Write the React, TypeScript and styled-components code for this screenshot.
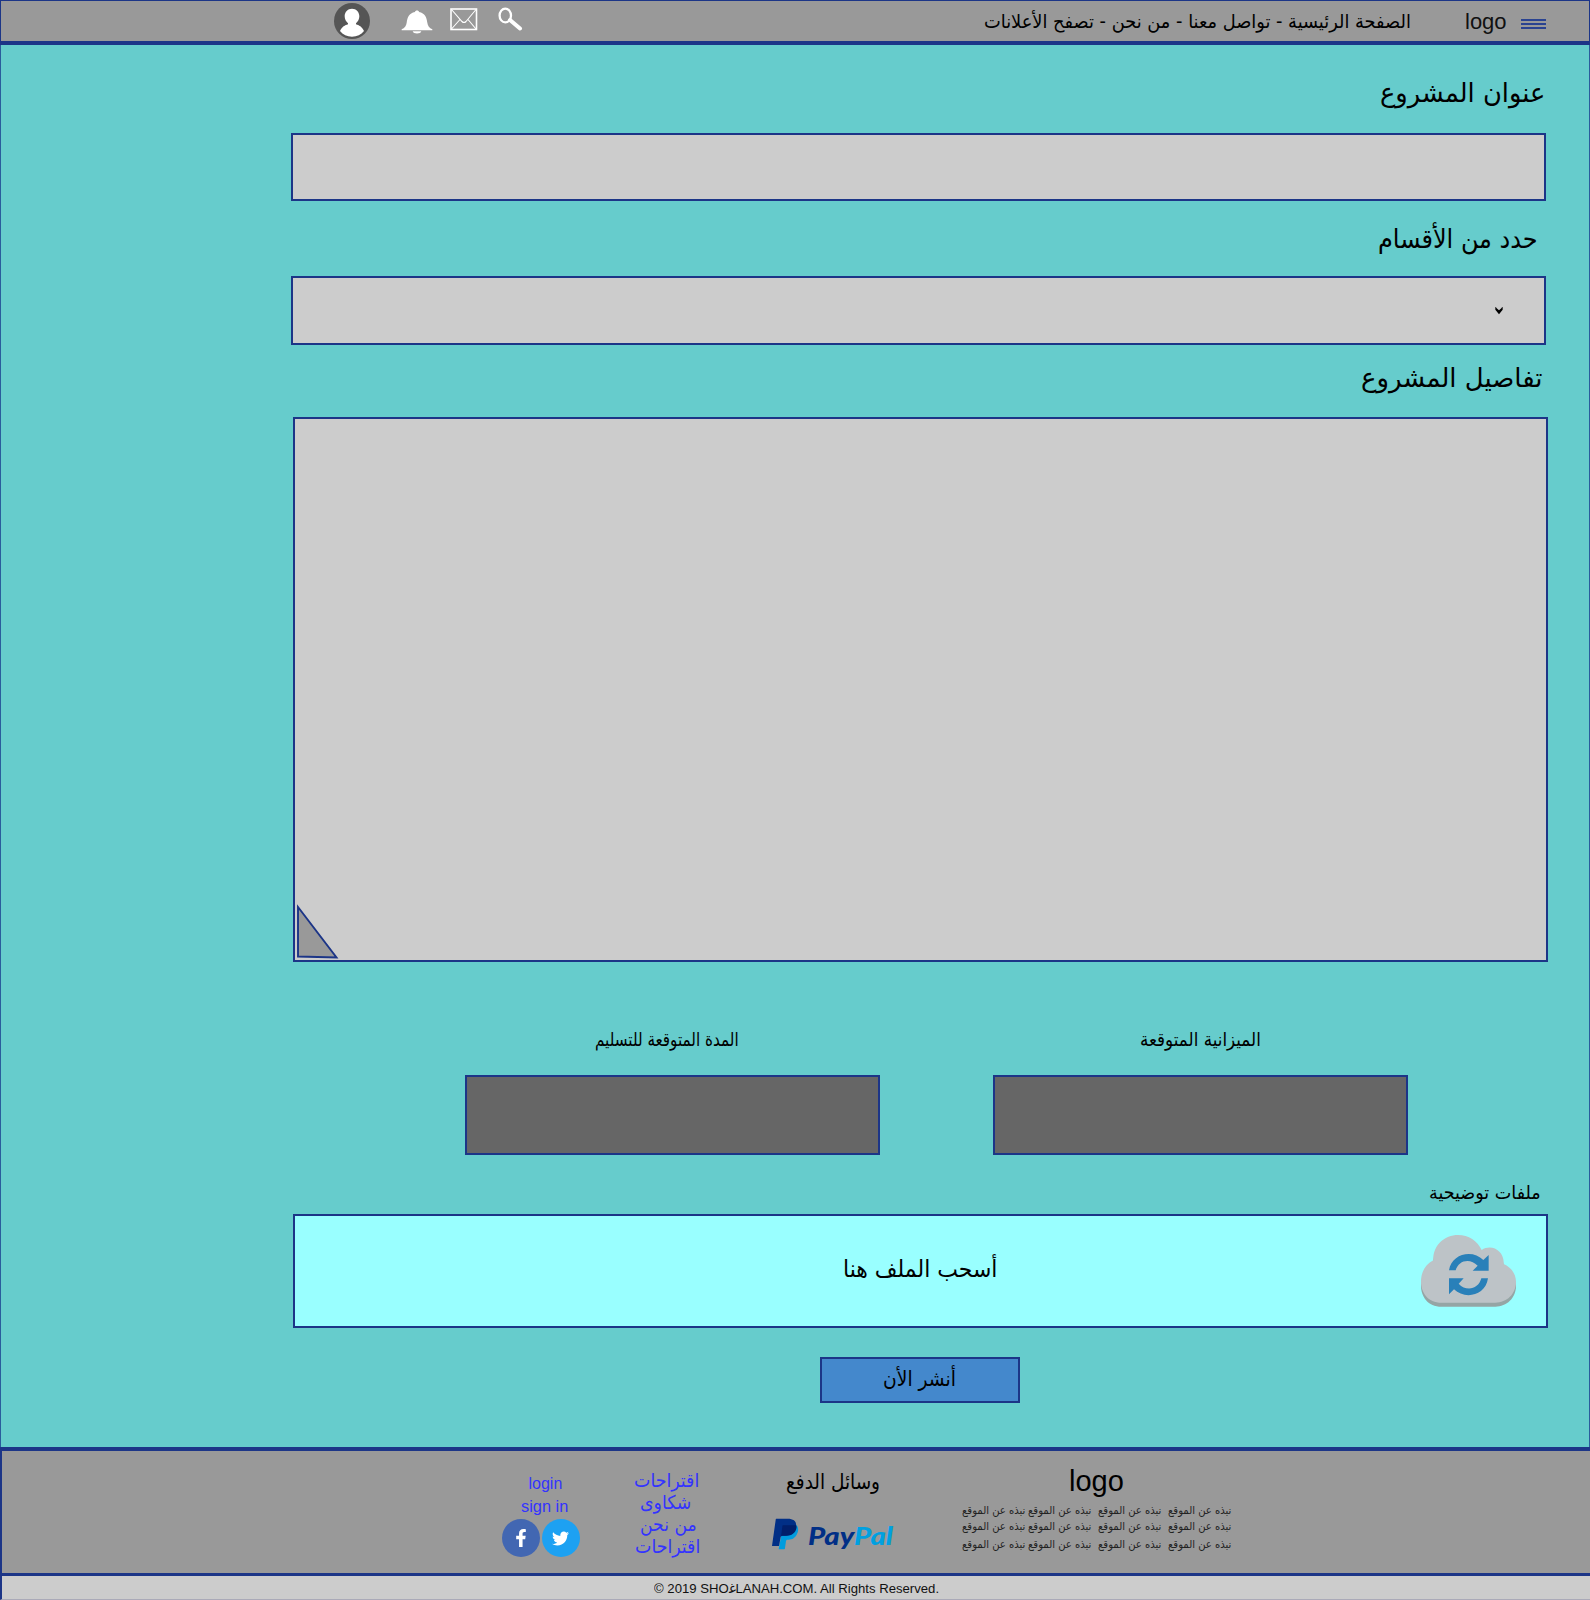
import React, { ReactNode, useLayoutEffect, useRef, useState } from 'react';
import styled, { createGlobalStyle } from 'styled-components';
import { FaFacebookF, FaTwitter } from 'react-icons/fa';

const navy = '#1c3587';
const arabic = '"DejaVu Sans", sans-serif';
const latin = '"Liberation Sans", Arial, sans-serif';

const GlobalStyle = createGlobalStyle`
  * { box-sizing: border-box; }
  body { margin: 0; background: #66cccc; font-family: ${latin}; color: #000; }
  svg { display: block; flex: none; }
`;

interface TextProps {
  $w: number;
  $size: number;
  $line: number;
  $font?: string;
  $color?: string;
  $mt?: number;
  $mr?: number;
  $ml?: number;
}

const TextBox = styled.div<TextProps>`
  flex: none;
  width: ${p => p.$w}px;
  height: ${p => p.$line}px;
  margin: ${p => p.$mt ?? 0}px ${p => p.$mr ?? 0}px 0 ${p => p.$ml ?? 0}px;
  font-family: ${p => p.$font ?? arabic};
  font-size: ${p => p.$size}px;
  line-height: ${p => p.$line}px;
  color: ${p => p.$color ?? '#000'};
  white-space: nowrap;
  text-align: left;
  direction: ltr;
`;

const TextRun = styled.span`
  display: inline-block;
  vertical-align: top;
  transform-origin: 0 50%;
`;

/* Single line of text condensed or widened to fill its box. */
function Text({ children, rtl = true, ...box }: TextProps & { children: ReactNode; rtl?: boolean }) {
  const ref = useRef<HTMLSpanElement>(null);
  const [scale, setScale] = useState(1);
  useLayoutEffect(() => {
    if (ref.current) setScale(box.$w / ref.current.offsetWidth);
  }, [box.$w]);
  return (
    <TextBox {...box}>
      <TextRun ref={ref} dir={rtl ? 'rtl' : 'ltr'} style={{ transform: `scaleX(${scale})` }}>
        {children}
      </TextRun>
    </TextBox>
  );
}

const Page = styled.div`
  width: 1590px;
  height: 1600px;
  display: flex;
  flex-direction: column;
  overflow: hidden;
`;

const Header = styled.header`
  flex: none;
  height: 45px;
  display: flex;
  align-items: flex-start;
  background: #999;
  border: 1px solid ${navy};
  border-bottom-width: 4px;
  padding-right: 43px;
`;

const Glyph = styled.div<{ $ml: number; $mt: number }>`
  margin: ${p => p.$mt}px 0 0 ${p => p.$ml}px;
`;

const NavText = styled.nav`
  margin: 8px 0 0 auto;
`;

const Menu = styled.div`
  display: flex;
  flex-direction: column;
  gap: 2px;
  width: 25px;
  margin: 18px 0 0 14px;
`;

const MenuBar = styled.span`
  height: 2px;
  background: #2a4391;
`;

const Main = styled.main`
  flex: none;
  height: 1402px;
  direction: rtl;
  display: flex;
  flex-direction: column;
  align-items: flex-start;
  background: #66cccc;
  border: solid #2a5c9c;
  border-width: 0 1px;
`;

const Field = styled.div<{ $h: number; $mt: number; $mr: number; $bg?: string }>`
  flex: none;
  display: flex;
  width: 1255px;
  height: ${p => p.$h}px;
  margin: ${p => p.$mt}px ${p => p.$mr}px 0 0;
  background: ${p => p.$bg ?? '#ccc'};
  border: 2px solid ${navy};
`;

const SelectField = styled(Field)`
  align-items: center;
  padding-right: 41px;
`;

const DetailsField = styled(Field)`
  align-items: flex-end;
  justify-content: flex-end;
`;

const Pair = styled.div`
  display: flex;
  gap: 113px;
  margin: 66px 181px 0 0;
`;

const PairItem = styled.div`
  width: 415px;
  display: flex;
  flex-direction: column;
  align-items: flex-start;
`;

const DarkBox = styled.div`
  width: 415px;
  height: 80px;
  margin-top: 25px;
  background: #666;
  border: 2px solid ${navy};
`;

const UploadField = styled(Field)`
  align-items: flex-start;
`;

const CloudSlot = styled.div`
  margin: 19px 30px 0 0;
`;

const Publish = styled.button`
  direction: rtl;
  display: flex;
  width: 200px;
  height: 46px;
  margin: 29px 569px 0 0;
  padding: 0;
  background: #4488cc;
  border: 2px solid ${navy};
`;

const Footer = styled.footer`
  flex: none;
  height: 129px;
  display: flex;
  align-items: flex-start;
  background: #999;
  border: solid ${navy};
  border-width: 4px 0 3px 2px;
  padding-left: 499.500px;
`;

const Column = styled.div<{ $w: number; $ml?: number }>`
  flex: none;
  width: ${p => p.$w}px;
  margin-left: ${p => p.$ml ?? 0}px;
  display: flex;
  flex-direction: column;
  align-items: flex-start;
`;

const Socials = styled.div`
  display: flex;
  gap: 2px;
  margin-top: 2px;
`;

const Social = styled.a<{ $bg: string }>`
  width: 38px;
  height: 38px;
  border-radius: 50%;
  display: flex;
  align-items: center;
  justify-content: center;
  background: ${p => p.$bg};
  color: #fff;
`;

const PayPal = styled.div`
  display: flex;
  align-items: flex-start;
  margin-top: 23px;
`;

const Wordmark = styled.div`
  font-weight: 900;
  font-style: italic;
`;

const Blue = styled.span`
  color: #00a0e0;
`;

const AboutRow = styled.div<{ $mt: number }>`
  display: flex;
  margin-top: ${p => p.$mt}px;
`;

const Bottom = styled.div`
  flex: none;
  height: 24px;
  display: flex;
  background: #ccc;
  border: solid ${navy};
  border-width: 0 0 1px 2px;
  border-bottom-color: #aaaab8;
  padding-left: 652px;
`;

const Avatar = () => (
  <svg width="36" height="36" viewBox="0 0 108 108">
    <circle cx="54" cy="54" r="54" fill="#555" />
    <path d="M54 17c-13 0-22 10-22 23 0 9 4 16 10 21v3c-9 3-18 7-24 20 9 11 21 17 36 17s27-6 36-17c-6-13-15-17-24-20v-3c6-5 10-12 10-21 0-13-9-23-22-23z" fill="#fff" />
  </svg>
);

const Bell = () => (
  <svg width="32" height="24" viewBox="0 0 96 72">
    <path d="M42 6c0-6 12-6 12 0 18 4 23 16 25 32 1 9 6 16 15 20v3H2v-3c9-4 14-11 15-20 2-16 7-28 25-32z" fill="#fff" />
    <path d="M35 64h26c-2 9-24 9-26 0z" fill="#fff" />
  </svg>
);

const Mail = () => (
  <svg width="28" height="23" viewBox="0 0 28 23" fill="none" stroke="#fff">
    <rect x="1" y="1" width="25.500" height="20.500" strokeWidth="1.600" />
    <path d="M1.500 1.500L12 13.500q2 2 4 0L26 1.500M1.500 21L10 11.500M26 21L18 11.500" strokeWidth="1.100" />
  </svg>
);

const Search = () => (
  <svg width="25" height="24" viewBox="0 0 25 24" fill="none" stroke="#fff">
    <ellipse cx="7.300" cy="8.500" rx="5.700" ry="6.900" strokeWidth="2.300" />
    <path d="M12 13L22 21.500" strokeWidth="4" strokeLinecap="round" />
  </svg>
);

const Chevron = () => (
  <svg width="8" height="8" viewBox="0 0 24 24">
    <path d="M1 0q2 0 4 4l7 6 7-6q2-4 4-4v8L12 22 1 8z" fill="#000" />
  </svg>
);

const ResizeGrip = () => (
  <svg width="44" height="56" viewBox="0 0 44 56">
    <path d="M3 3V52.500L41.500 53.500z" fill="#999" stroke={navy} strokeWidth="1.900" />
  </svg>
);

const cloudShape =
  'M62 203C20 203 0 172 0 140c0-28 12-51 37-64C35 32 70 0 111 0c32 0 58 17 71 45 30-20 69 3 66 42 23 10 37 30 37 54 0 36-28 62-62 62z';

const Cloud = () => (
  <svg width="95" height="72" viewBox="0 0 285 216">
    <path d={cloudShape} transform="translate(0 12)" fill="#95a5a5" />
    <path d={cloudShape} fill="#bdc3c7" />
    <g fill="#2980b9">
      <path d="M84 106C92 55 155 42 187 75L203 60V107H155L170 92C148 68 112 75 104 106Z" />
      <path d="M84 130H128L113 146C135 170 172 164 181 130H201C193 184 130 194 99 163L84 178Z" />
    </g>
  </svg>
);

const PayPalMark = () => (
  <svg width="27" height="32" viewBox="0 0 81 96">
    <path d="M34 22h40c7 8 5 20 0 28-7 13-18 15-27 15-3 0-4 1-5 4l-3 21c0 3-1 4-4 4H20z" fill="#009cde" />
    <path d="M14 2h33c18 0 28 8 25 25-4 20-18 26-33 26H31c-3 0-4 1-5 4l-5 27H0L11 6c0-3 1-4 3-4z" fill="#012f86" />
    <path d="M34 22h38c3 4 2 9 0 13-6 15-18 18-33 18H31q-3 0-4 3l4-30c0-3 1-4 3-4z" fill="#011f6a" />
  </svg>
);

const link = '#3333ff';
const about = 'نبذه عن الموقع';

export default function App() {
  return (
    <Page>
      <GlobalStyle />
      <Header>
        <Glyph $ml={332.5} $mt={2}><Avatar /></Glyph>
        <Glyph $ml={31} $mt={8.5}><Bell /></Glyph>
        <Glyph $ml={17} $mt={7}><Mail /></Glyph>
        <Glyph $ml={20} $mt={6}><Search /></Glyph>
        <NavText>
          <Text $w={427} $size={19} $line={24}>الصفحة الرئيسية - تواصل معنا - من نحن - تصفح الأعلانات</Text>
        </NavText>
        <Text $w={42} $size={22} $line={26} $mt={8} $ml={54} $font={latin} $color="#111" rtl={false}>logo</Text>
        <Menu>
          <MenuBar /><MenuBar /><MenuBar />
        </Menu>
      </Header>

      <Main>
        <Text $w={165} $size={26.5} $line={30} $mt={33} $mr={44}>عنوان المشروع</Text>
        <Field $h={68} $mt={25} $mr={43} />
        <Text $w={160} $size={26.5} $line={30} $mt={23} $mr={51}>حدد من الأقسام</Text>
        <SelectField $h={69} $mt={22} $mr={43}><Chevron /></SelectField>
        <Text $w={181} $size={26.5} $line={30} $mt={18} $mr={47}>تفاصيل المشروع</Text>
        <DetailsField $h={545} $mt={24} $mr={41}><ResizeGrip /></DetailsField>
        <Pair>
          <PairItem>
            <Text $w={121} $size={19} $line={22} $mr={147}>الميزانية المتوقعة</Text>
            <DarkBox />
          </PairItem>
          <PairItem>
            <Text $w={144} $size={19} $line={22} $mr={141}>المدة المتوقعة للتسليم</Text>
            <DarkBox />
          </PairItem>
        </Pair>
        <Text $w={112} $size={18.5} $line={22} $mt={27} $mr={48}>ملفات توضيحية</Text>
        <UploadField $h={114} $mt={10} $mr={41} $bg="#99ffff">
          <CloudSlot><Cloud /></CloudSlot>
          <Text $w={154} $size={23.5} $line={28} $mt={39} $mr={424}>أسحب الملف هنا</Text>
        </UploadField>
        <Publish>
          <Text $w={73} $size={21} $line={26} $mt={7} $mr={62}>أنشر الأن</Text>
        </Publish>
      </Main>

      <Footer>
        <Column $w={78}>
          <Text $w={34} $size={16} $line={20} $mt={23} $ml={27} $font={latin} $color={link} rtl={false}>login</Text>
          <Text $w={47} $size={16} $line={20} $mt={3} $ml={19.5} $font={latin} $color={link} rtl={false}>sign in</Text>
          <Socials>
            <Social $bg="#4267b2"><FaFacebookF size={18} /></Social>
            <Social $bg="#1da1f2"><FaTwitter size={17} /></Social>
          </Socials>
        </Column>
        <Column $w={66} $ml={54.5}>
          <Text $w={65} $size={19} $line={22} $mt={18} $color={link}>اقتراحات</Text>
          <Text $w={51} $size={19} $line={22} $ml={6} $color={link}>شكاوى</Text>
          <Text $w={57} $size={19} $line={22} $ml={6} $color={link}>من نحن</Text>
          <Text $w={65} $size={19} $line={22} $ml={1} $color={link}>اقتراحات</Text>
        </Column>
        <Column $w={122} $ml={72}>
          <Text $w={94} $size={21} $line={26} $mt={18} $ml={14}>وسائل الدفع</Text>
          <PayPal>
            <PayPalMark />
            <Wordmark>
              <Text $w={85} $size={24.5} $line={28} $mt={4} $ml={9} $font="Lato, sans-serif" $color="#012f86" rtl={false}>
                Pay<Blue>Pal</Blue>
              </Text>
            </Wordmark>
          </PayPal>
        </Column>
        <Column $w={270} $ml={68}>
          <Text $w={55} $size={29} $line={34} $mt={13} $ml={107} $font={latin} rtl={false}>logo</Text>
          {[6, 2, 4].map((mt, row) => (
            <AboutRow key={row} $mt={mt}>
              {[0, 3, 7, 7].map((ml, i) => (
                <Text key={i} $w={63} $size={11} $line={14} $ml={ml} $color="#222">{about}</Text>
              ))}
            </AboutRow>
          ))}
        </Column>
      </Footer>
      <Bottom>
        <Text $w={285} $size={13.7} $line={25} $font={latin} $color="#111" rtl={false}>© 2019 SHOغ&zwj;LANAH.COM. All Rights Reserved.</Text>
      </Bottom>
    </Page>
  );
}
